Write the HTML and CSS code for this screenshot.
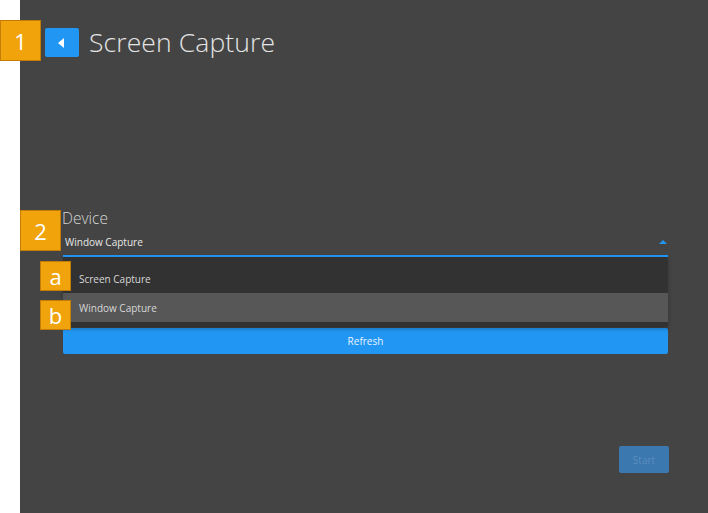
FILE: index.html
```html
<!DOCTYPE html>
<html>
<head>
<meta charset="utf-8">
<link rel="stylesheet" href="styles.css">
</head>
<body>
<div class="page">
  <div class="panel">
    <header class="header">
      <button class="back" aria-label="Back">
        <svg width="8" height="10" viewBox="0 0 8 10"><path d="M7 0 L1 5 L7 10 Z" fill="#fff"/></svg>
      </button>
      <h1 class="title">Screen Capture</h1>
    </header>

    <section class="form">
      <div class="label">Device</div>
      <div class="field">
        <span class="value">Window Capture</span>
        <svg class="caret" width="8" height="5" viewBox="0 0 8 5"><path d="M0 5 L4 1 L8 5 Z" fill="#2196f3"/></svg>
        <div class="popup">
          <div class="item first">Screen Capture</div>
          <div class="item selected">Window Capture</div>
        </div>
      </div>
      <button class="refresh">Refresh</button>
      <div class="actions">
        <button class="start">Start</button>
      </div>
    </section>
  </div>

  <div class="badge b1">1</div>
  <div class="badge b2">2</div>
  <div class="badge small ba">a</div>
  <div class="badge small bb">b</div>
</div>
</body>
</html>
```

FILE: styles.css
```css
html, body {
  margin: 0;
  padding: 0;
  background: #ffffff;
  font-family: "Open Sans", "Noto Sans", "DejaVu Sans", sans-serif;
}
.page {
  position: relative;
  width: 708px;
  height: 513px;
  overflow: hidden;
}
.panel {
  margin-left: 20px;
  height: 513px;
  background: #444444;
  box-sizing: border-box;
  padding-top: 28px;
}
.header {
  display: flex;
  align-items: center;
  padding-left: 25px;
  height: 29px;
}
.back {
  width: 34px;
  height: 29px;
  border: none;
  border-radius: 2px;
  background: #2196f3;
  display: flex;
  align-items: center;
  justify-content: center;
  padding: 0;
  margin: 0;
}
.back svg { margin-left: -2px; }
.title {
  margin: 0 0 0 10px;
  font-family: "Open Sans", sans-serif;
  font-weight: 300;
  font-size: 26.5px;
  color: #e4e4e4;
  letter-spacing: 0.1px;
  line-height: 29px;
  padding-bottom: 1px;
}
.form {
  margin-left: 43px;
  width: 605px;
  margin-top: 151px;
}
.label {
  font-size: 15.5px;
  font-weight: 300;
  color: #d6d6d6;
  line-height: 20px;
  margin-left: -1px;
}
.field {
  position: relative;
  height: 29px;
  border-bottom: 2px solid #2196f3;
  box-sizing: border-box;
  display: flex;
  align-items: center;
}
.value {
  font-size: 10px;
  color: #e8e8e8;
  margin-left: 2px;
  margin-top: 1px;
}
.caret {
  position: absolute;
  right: 1px;
  top: 11px;
}
.popup {
  position: absolute;
  left: 0;
  right: 0;
  top: 29px;
  background: #323232;
  padding-bottom: 5px;
  box-shadow: 0 2px 4px rgba(0,0,0,0.25);
  z-index: 2;
}
.item {
  height: 35px;
  display: flex;
  align-items: center;
  padding-left: 16px;
  font-size: 10px;
  color: #d8d8d8;
  box-sizing: border-box;
}
.item.first {
  padding-top: 9px;
}
.item.selected {
  height: 29px;
  margin-top: 1px;
  background: #575757;
}
.refresh {
  display: block;
  width: 100%;
  height: 26px;
  margin-top: 71px;
  border: none;
  border-radius: 2px;
  background: #2196f3;
  color: #eaf4ff;
  font-family: "Open Sans", sans-serif;
  font-size: 10px;
  padding: 0;
}
.actions {
  display: flex;
  justify-content: flex-end;
  margin-top: 92px;
  margin-right: -1px;
}
.start {
  width: 50px;
  height: 27px;
  border: none;
  border-radius: 2px;
  background: #3b78b0;
  color: #5a8dbd;
  font-family: "Open Sans", sans-serif;
  font-size: 10px;
  padding: 0;
}
.badge {
  position: absolute;
  box-sizing: border-box;
  background: #f0a30a;
  border: 1px solid #c37c06;
  color: #ffffff;
  display: flex;
  align-items: center;
  justify-content: center;
  font-size: 22px;
  font-family: "Open Sans", sans-serif;
  z-index: 5;
}
.b1 { left: 0; top: 20px; width: 41px; height: 41px; }
.b2 { left: 20px; top: 210px; width: 41px; height: 41px; }
.small { width: 31px; height: 30px; font-size: 22px; }
.ba { left: 40px; top: 261px; }
.bb { left: 40px; top: 300px; }
```
